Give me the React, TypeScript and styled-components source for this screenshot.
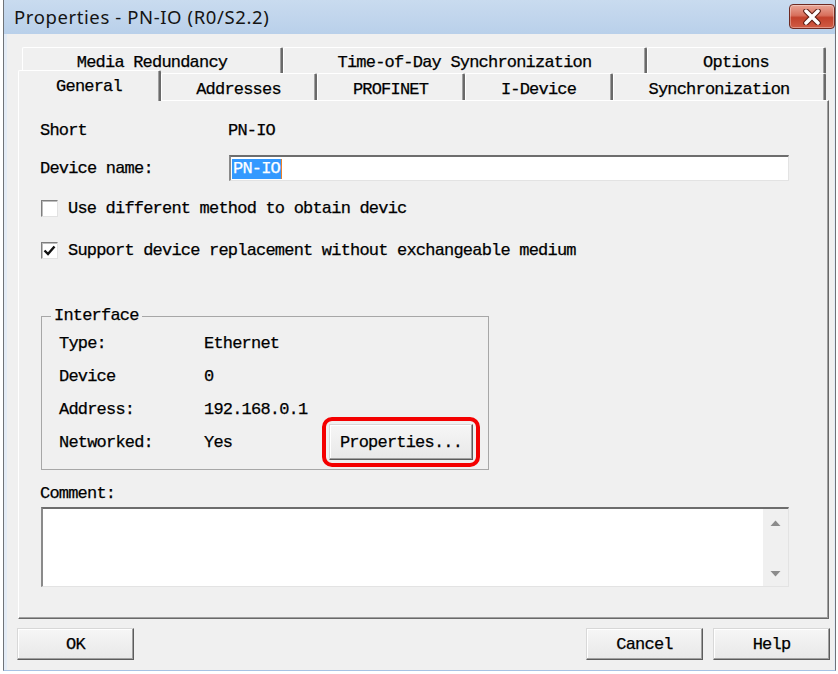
import React from "react";
import styled, { createGlobalStyle } from "styled-components";

const GlobalStyle = createGlobalStyle`
  html, body { margin: 0; padding: 0; background: #ffffff; }
  body {
    font-family: "Liberation Mono", "DejaVu Sans Mono", monospace;
    color: #000;
    -webkit-text-stroke: 0.25px #000;
  }
  * { box-sizing: border-box; }
`;

const Window = styled.div`
  margin-left: 3px;
  width: 833px;
  height: 671px;
  display: flex;
  flex-direction: column;
  border-left: 1px solid #6f7378;
  border-right: 1px solid #6f7378;
  border-bottom: 1px solid #a6c2e4;
  background: #e4ecf6;
`;

const TitleBar = styled.div`
  height: 34px;
  flex: none;
  display: flex;
  align-items: flex-start;
  justify-content: space-between;
  padding: 0 0 0 10px;
  background: linear-gradient(#c9dbef, #b9d0ea);
`;

const TitleText = styled.div`
  font-family: "Noto Sans", "Open Sans", sans-serif;
  font-size: 18.5px;
  line-height: 34px;
  color: #141414;
  letter-spacing: 0.6px;
  -webkit-text-stroke: 0;
`;

const CloseButton = styled.div`
  width: 46px;
  height: 25px;
  margin-top: 4px;
  border: 1px solid #6e2a22;
  border-radius: 4px;
  background: linear-gradient(#e9a697 0%, #d8705d 45%, #c2412c 55%, #d05c45 100%);
  box-shadow: inset 0 0 0 1px rgba(255, 255, 255, 0.35);
  display: flex;
  align-items: center;
  justify-content: center;
`;

const Client = styled.div`
  flex: 1;
  margin: 0 1px 0 3px;
  background: #f0f0f0;
  padding: 13px 5px 0 11px;
  display: flex;
  flex-direction: column;
`;

const TabStrip = styled.div`
  width: 810px;
  display: flex;
  flex-direction: column;
`;

const TabRow = styled.div<{ $indent: number; $h: number }>`
  display: flex;
  align-items: flex-end;
  height: ${(p) => p.$h}px;
  padding-left: ${(p) => p.$indent}px;
`;

const Tab = styled.div<{ $w: number; $active?: boolean }>`
  flex: none;
  width: ${(p) => p.$w}px;
  height: ${(p) => (p.$active ? "31px" : "100%")};
  margin-bottom: ${(p) => (p.$active ? "-1px" : "0")};
  position: relative;
  z-index: ${(p) => (p.$active ? 2 : 0)};
  background: #f0f0f0;
  border-top: 1px solid #ffffff;
  border-left: 1px solid #ffffff;
  border-right: 2px solid #6a6a6a;
  border-top-left-radius: 2px;
  border-top-right-radius: 2px;
  box-shadow: inset -1px 0 0 #a0a0a0;
  display: flex;
  align-items: ${(p) => (p.$active ? "flex-start" : "center")};
  padding-top: ${(p) => (p.$active ? "6px" : "4px")};
  justify-content: center;
  font-size: 17px;
  letter-spacing: -0.8px;
  white-space: nowrap;
`;

const Panel = styled.div`
  width: 811px;
  height: 519px;
  border: 1px solid;
  border-color: #ffffff #696969 #696969 #ffffff;
  box-shadow: inset -1px -1px 0 #a0a0a0;
  padding: 16px 39px 0 21px;
  display: flex;
  flex-direction: column;
`;

const FieldRow = styled.div<{ $mt?: number }>`
  display: flex;
  align-items: center;
  height: 26px;
  margin-top: ${(p) => p.$mt ?? 0}px;
`;

const Label = styled.div<{ $w: number }>`
  width: ${(p) => p.$w}px;
  flex: none;
  font-size: 17px;
  letter-spacing: -0.8px;
  white-space: nowrap;
`;

const Value = styled.div<{ $w?: number }>`
  width: ${(p) => (p.$w ? `${p.$w}px` : "auto")};
  flex: none;
  font-size: 17px;
  letter-spacing: -0.8px;
  white-space: nowrap;
`;

const TextInput = styled.div`
  width: 560px;
  height: 26px;
  margin-left: 1px;
  background: #ffffff;
  border-top: 2px solid #6d6d6d;
  border-left: 2px solid #8a8a8a;
  border-right: 1px solid #e3e3e3;
  border-bottom: 1px solid #e3e3e3;
  display: flex;
  align-items: center;
  padding-left: 1px;
`;

const Selection = styled.span`
  background: #3399ff;
  color: #ffffff;
  -webkit-text-stroke: 0.25px #ffffff;
  font-size: 17px;
  letter-spacing: -0.8px;
  line-height: 20px;
  padding: 0 1px;
  border-right: 1px solid #e8812c;
`;

const Checkbox = styled.div`
  width: 17px;
  height: 17px;
  margin-left: 1px;
  margin-right: 10px;
  flex: none;
  background: #ffffff;
  border: 1px solid;
  border-color: #7e7e7e #e2e2e2 #e2e2e2 #7e7e7e;
  box-shadow: inset 1px 1px 0 #bdbdbd;
  display: flex;
  align-items: center;
  justify-content: center;
`;

const CheckText = styled.div`
  font-size: 17px;
  letter-spacing: -0.8px;
  white-space: nowrap;
`;

const GroupBox = styled.fieldset`
  margin: 44px 0 0 1px;
  width: 448px;
  padding: 5px 0 14px 17px;
  border: 1px solid #a7a7a7;
  display: flex;
  flex-direction: column;
  gap: 7px;
  min-width: 0;
`;

const Legend = styled.legend`
  margin-left: -8px;
  padding: 0 3px;
  line-height: 18px;
  font-size: 17px;
  letter-spacing: -0.8px;
`;

const Ring = styled.div`
  border: 4px solid #f40000;
  border-radius: 10px;
  padding: 3px;
  flex: none;
`;

const Button = styled.div<{ $w: number; $h: number }>`
  width: ${(p) => p.$w}px;
  height: ${(p) => p.$h}px;
  flex: none;
  background: linear-gradient(#f6f6f6, #e8e8e8);
  border: 1px solid;
  border-color: #d8d8d8 #5c5c5c #5c5c5c #d8d8d8;
  box-shadow: inset -1px -1px 0 #a0a0a0, inset 1px 1px 0 #ffffff;
  display: flex;
  align-items: center;
  justify-content: center;
  font-size: 17px;
  letter-spacing: -0.8px;
  white-space: nowrap;
`;

const CommentLabel = styled.div`
  height: 20px;
  margin-top: 13px;
  display: flex;
  align-items: center;
  font-size: 17px;
  letter-spacing: -0.8px;
`;

const TextArea = styled.div`
  width: 748px;
  height: 80px;
  margin: 4px 0 0 1px;
  background: #ffffff;
  border-top: 2px solid #6d6d6d;
  border-left: 2px solid #8a8a8a;
  border-right: 1px solid #e3e3e3;
  border-bottom: 1px solid #e3e3e3;
  display: flex;
  justify-content: flex-end;
`;

const ScrollBar = styled.div`
  width: 25px;
  height: 100%;
  background: #f0f0f0;
  display: flex;
  flex-direction: column;
  justify-content: space-between;
  align-items: center;
  padding: 11px 0 9px;
`;

const ButtonBar = styled.div`
  margin-top: 9px;
  height: 32px;
  margin-left: -1px;
  margin-right: -1px;
  display: flex;
  justify-content: space-between;
`;

const ButtonGroup = styled.div`
  display: flex;
  gap: 10px;
`;

const Arrow = ({ up }: { up?: boolean }) => (
  <svg width="11" height="6" viewBox="0 0 11 6">
    <path d={up ? "M0.5 6 L5.5 0.5 L10.5 6 Z" : "M0.5 0 L5.5 5.5 L10.5 0 Z"} fill="#8c8c8c" />
  </svg>
);

const CloseIcon = () => (
  <svg width="20" height="16" viewBox="0 0 20 16">
    <path d="M4 2 L16 14 M16 2 L4 14" stroke="#5a1a12" strokeWidth="5.5" strokeLinecap="round" />
    <path d="M4 2 L16 14 M16 2 L4 14" stroke="#ffffff" strokeWidth="3.5" strokeLinecap="round" />
  </svg>
);

const CheckMark = () => (
  <svg width="13" height="13" viewBox="0 0 13 13">
    <path d="M1.5 6.5 L5 10 L11.5 2.5" fill="none" stroke="#111" strokeWidth="2.4" />
  </svg>
);

const topTabs = [
  { t: "Media Redundancy", w: 261 },
  { t: "Time-of-Day Synchronization", w: 364 },
  { t: "Options", w: 179 },
];

const bottomTabs = [
  { t: "General", w: 143, a: true },
  { t: "Addresses", w: 156 },
  { t: "PROFINET", w: 148 },
  { t: "I-Device", w: 148 },
  { t: "Synchronization", w: 213 },
];

const ifaceRows = [
  ["Type:", "Ethernet"],
  ["Device", "0"],
  ["Address:", "192.168.0.1"],
];

export default function App() {
  return (
    <>
      <GlobalStyle />
      <Window>
        <TitleBar>
          <TitleText>Properties - PN-IO (R0/S2.2)</TitleText>
          <CloseButton>
            <CloseIcon />
          </CloseButton>
        </TitleBar>
        <Client>
          <TabStrip>
            <TabRow $indent={4} $h={26}>
              {topTabs.map((t) => (
                <Tab key={t.t} $w={t.w}>{t.t}</Tab>
              ))}
            </TabRow>
            <TabRow $indent={0} $h={27}>
              {bottomTabs.map((t) => (
                <Tab key={t.t} $w={t.w} $active={t.a}>{t.t}</Tab>
              ))}
            </TabRow>
          </TabStrip>
          <Panel>
            <FieldRow>
              <Label $w={188}>Short</Label>
              <Value>PN-IO</Value>
            </FieldRow>
            <FieldRow $mt={12}>
              <Label $w={188}>Device name:</Label>
              <TextInput>
                <Selection>PN-IO</Selection>
              </TextInput>
            </FieldRow>
            <FieldRow $mt={14}>
              <Checkbox />
              <CheckText>Use different method to obtain devic</CheckText>
            </FieldRow>
            <FieldRow $mt={16}>
              <Checkbox>
                <CheckMark />
              </Checkbox>
              <CheckText>Support device replacement without exchangeable medium</CheckText>
            </FieldRow>
            <GroupBox>
              <Legend>Interface</Legend>
              {ifaceRows.map(([l, v]) => (
                <FieldRow key={l}>
                  <Label $w={145}>{l}</Label>
                  <Value>{v}</Value>
                </FieldRow>
              ))}
              <FieldRow>
                <Label $w={145}>Networked:</Label>
                <Value $w={118}>Yes</Value>
                <Ring>
                  <Button $w={144} $h={36}>Properties...</Button>
                </Ring>
              </FieldRow>
            </GroupBox>
            <CommentLabel>Comment:</CommentLabel>
            <TextArea>
              <ScrollBar>
                <Arrow up />
                <Arrow />
              </ScrollBar>
            </TextArea>
          </Panel>
          <ButtonBar>
            <Button $w={117} $h={32}>OK</Button>
            <ButtonGroup>
              <Button $w={117} $h={32}>Cancel</Button>
              <Button $w={117} $h={32}>Help</Button>
            </ButtonGroup>
          </ButtonBar>
        </Client>
      </Window>
    </>
  );
}
